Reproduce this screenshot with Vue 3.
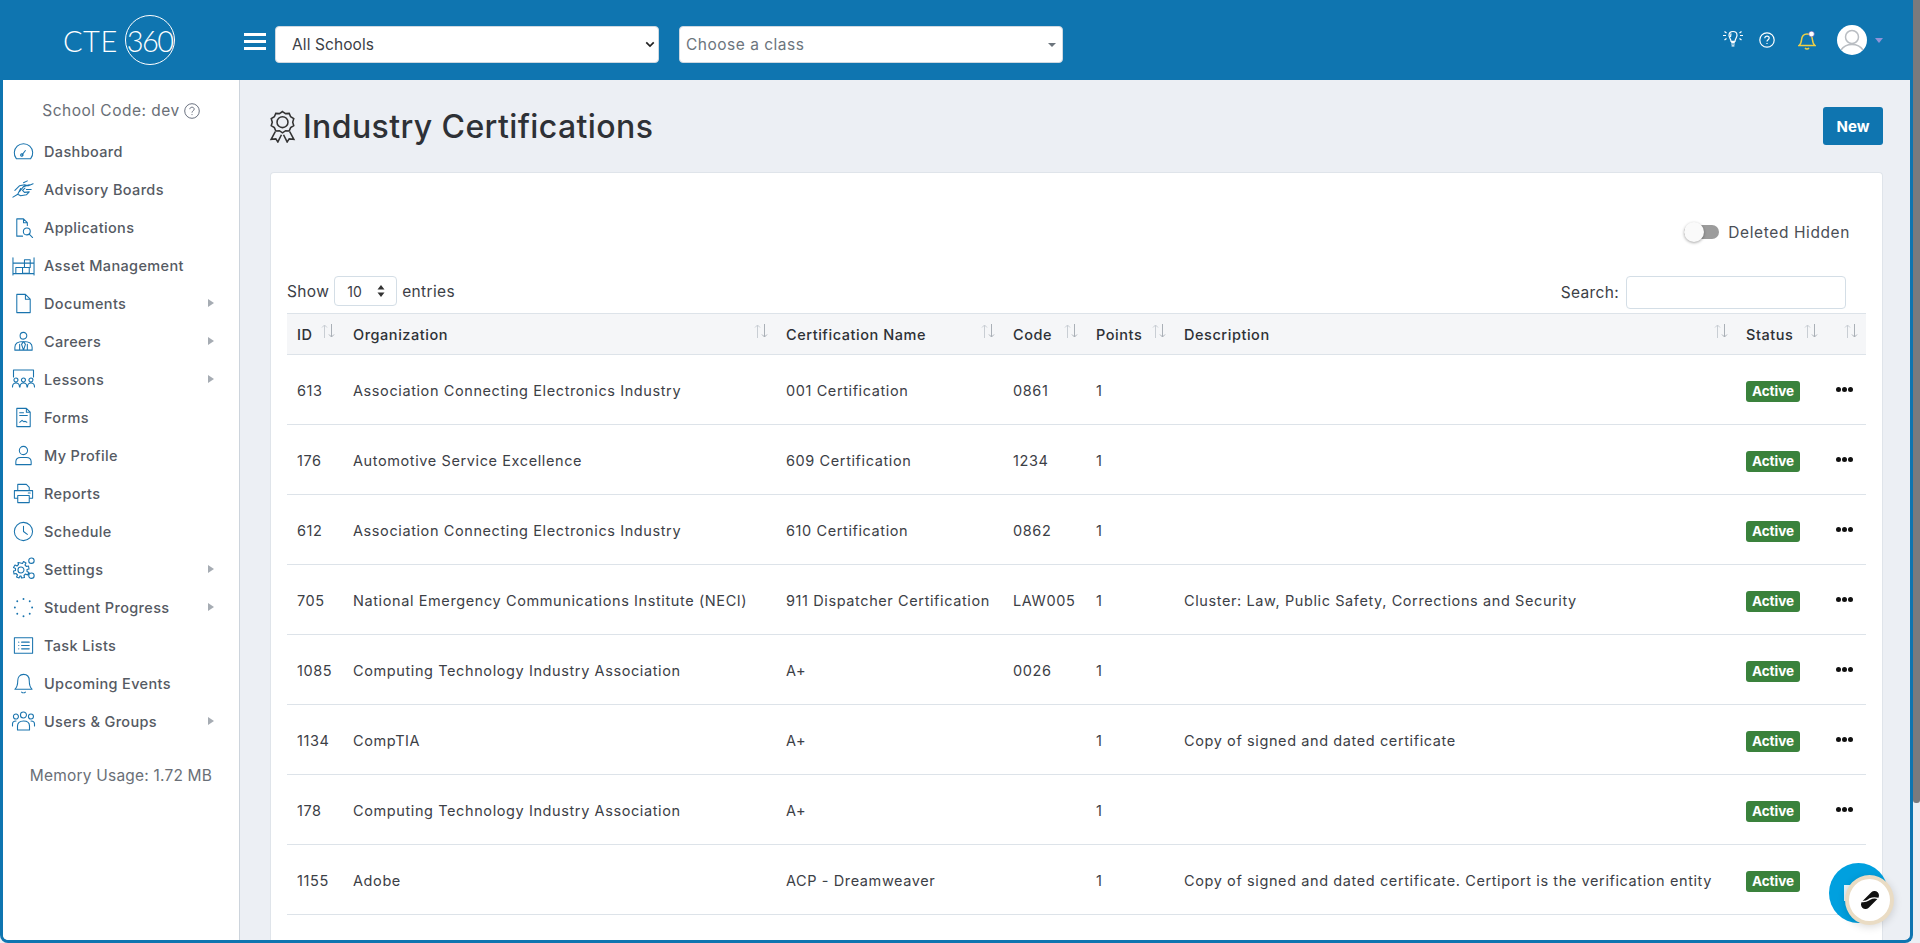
<script setup>
import { ref } from 'vue'

const schoolFilter = ref('All Schools')
const pageSize = ref('10')
const search = ref('')

// Sidebar entries, d is the outline of the icon on a 24 box
const navItems = [
  { label: 'Dashboard', d: 'M4.5 19.5h15a9.6 9.6 0 1 0-15 0zM10.5 15.5l3.5-4.5M11.5 15.2a1.3 1.3 0 1 1-2.5.6 1.3 1.3 0 0 1 2.5-.6z' },
  { label: 'Advisory Boards', d: 'M1 20l5-3 3 1.500 6-1 3-3-5 .5-2-2 2.500-2.500M3 13l5-5 5-1 4 1 5-2M8 14l4-5 6-2M12 5l4-2M15 12l5 0M6 17l3-6' },
  { label: 'Applications', d: 'M11 21H5V3h7l4 4v3M12 3v4h4M15.500 12.500a3.600 3.600 0 1 1-.1 7.200 3.600 3.600 0 0 1 .1-7.200zM18 19l3.500 3.500' },
  { label: 'Asset Management', d: 'M1 4v18M23 4v18M1 20.500h22M1 9.500h22M4 20v-6h7v6M11 14h7v6h-7M4 14h7M13 14V6h6v8' },
  { label: 'Documents', d: 'M5 2.500h9l5 5v14H5zM14 2.500v5h5', sub: true },
  { label: 'Careers', d: 'M12 2.500a3.500 3.500 0 1 1-.1 7 3.500 3.500 0 0 1 .1-7zM3 21v-3c0-4 4-6 9-6s9 2 9 6v3zM8 21v-6M16 21v-6M12 12l-2 3 2 6 2-6z', sub: true },
  { label: 'Lessons', wide: true, d: 'M2 10V3h20v7M4.500 11a2 2 0 1 1-.1 4 2 2 0 0 1 .1-4zM12 11a2 2 0 1 1-.1 4 2 2 0 0 1 .1-4zM19.500 11a2 2 0 1 1-.1 4 2 2 0 0 1 .1-4zM1 20c0-3 1.500-4 3.500-4S8 17 8 20M8.500 20c0-3 1.500-4 3.500-4s3.500 1 3.500 4M16 20c0-3 1.500-4 3.500-4s3.500 1 3.500 4', sub: true },
  { label: 'Forms', d: 'M5 2.500h10l4 4v15H5zM15 2.500v4h4M8 7h4M8 10h8M8 17l2.500-2 2 1.500 1-.5 2 1' },
  { label: 'My Profile', d: 'M12 2.500a4.300 4.300 0 1 1-.1 8.600 4.300 4.300 0 0 1 .1-8.600zM4 21.500v-3c0-3 2-4.500 5-4.500h6c3 0 5 1.500 5 4.500v3z' },
  { label: 'Reports', d: 'M6 9V2.500h9l3 3V9M6 17H2.500V9h19v8H18M6 14h12v7.500H6zM17 11.500h2', sub: false },
  { label: 'Schedule', d: 'M12 2.500a9.500 9.500 0 1 1-.1 19 9.500 9.500 0 0 1 .1-19zM12 6.500V12l4 3' },
  { label: 'Settings', wide: true, sub: true, d: 'M9 6l2 .5 1-2 2.500 1.500-1 2 1.500 1.500 2-.5.500 3-2 .5v2l2 1-1.500 2.500-2-1-1.500 1.500.5 2-3 .5-.5-2H8.500l-1 2L5 20l1-2-1.500-1.500-2 .5L2 14l2-.5v-2l-2-1L3.500 8l2 1L7 7.500l-.5-2zM9.500 10a3 3 0 1 1-.1 6 3 3 0 0 1 .1-6zM20 1a2.700 2.700 0 1 1-.1 5.400A2.700 2.700 0 0 1 20 1zM20 16a2.700 2.700 0 1 1-.1 5.400A2.700 2.700 0 0 1 20 16z' },
  { label: 'Student Progress', dotted: true, sub: true, d: 'M12 3v.1M18.500 5.500v.1M21 12v.1M18.500 18.500v.1M12 21v.1M5.500 18.500v.1M3 12v.1M5.500 5.500v.1' },
  { label: 'Task Lists', d: 'M2.500 4h19v16h-19zM7 8.500h.1M7 12h.1M7 15.500h.1M10 8.500h8M10 12h8M10 15.500h8' },
  { label: 'Upcoming Events', d: 'M12 2.500c4 0 6 3 6 6.500 0 5 1 7 3 9H3c2-2 3-4 3-9 0-3.500 2-6.500 6-6.500zM10 21c1 1 3 1 4 0' },
  { label: 'Users & Groups', wide: true, sub: true, d: 'M12 3a3 3 0 1 1-.1 6 3 3 0 0 1 .1-6zM4.500 5a2.500 2.500 0 1 1-.1 5 2.500 2.500 0 0 1 .1-5zM19.500 5a2.500 2.500 0 1 1-.1 5 2.500 2.500 0 0 1 .1-5zM6 21v-4c0-3 2-5 6-5s6 2 6 5v4zM1 17v-2c0-2 1.500-3 3.500-3M23 17v-2c0-2-1.500-3-3.500-3' }
]

const columns = [
  { label: 'ID', width: 56 },
  { label: 'Organization', width: 433 },
  { label: 'Certification Name', width: 227 },
  { label: 'Code', width: 83 },
  { label: 'Points', width: 88 },
  { label: 'Description', width: 562 },
  { label: 'Status', width: 90 },
  { label: '', width: 40 }
]

const certifications = [
  { id: 613, org: 'Association Connecting Electronics Industry', name: '001 Certification', code: '0861', points: 1, desc: '' },
  { id: 176, org: 'Automotive Service Excellence', name: '609 Certification', code: '1234', points: 1, desc: '' },
  { id: 612, org: 'Association Connecting Electronics Industry', name: '610 Certification', code: '0862', points: 1, desc: '' },
  { id: 705, org: 'National Emergency Communications Institute (NECI)', name: '911 Dispatcher Certification', code: 'LAW005', points: 1, desc: 'Cluster: Law, Public Safety, Corrections and Security' },
  { id: 1085, org: 'Computing Technology Industry Association', name: 'A+', code: '0026', points: 1, desc: '' },
  { id: 1134, org: 'CompTIA', name: 'A+', code: '', points: 1, desc: 'Copy of signed and dated certificate' },
  { id: 178, org: 'Computing Technology Industry Association', name: 'A+', code: '', points: 1, desc: '' },
  { id: 1155, org: 'Adobe', name: 'ACP - Dreamweaver', code: '', points: 1, desc: 'Copy of signed and dated certificate. Certiport is the verification entity' }
]
</script>

<template>
  <div class="page">
    <div class="shell">
      <header class="topbar">
        <div class="logo">
          <span class="logo-cte">CTE</span>
          <span class="logo-ring">360</span>
        </div>
        <button class="burger" aria-label="Menu"><i></i><i></i><i></i></button>
        <div class="select-wrap">
          <select v-model="schoolFilter" class="top-select">
            <option>All Schools</option>
          </select>
          <svg class="chevron" viewBox="0 0 12 8"><path d="M1.500 1.500 6 6l4.500-4.500" /></svg>
        </div>
        <div class="class-picker">
          <span>Choose a class</span>
          <i class="picker-caret"></i>
        </div>
        <div class="top-icons">
          <svg class="ic-bulb" viewBox="0 0 20 18" fill="none" stroke="#fff" stroke-width="1.200">
            <path d="M10 1.500c-2.500 0-4 1.800-4 3.800 0 2.200 1.700 3 2 6h4c.3-3 2-3.800 2-6 0-2-1.500-3.800-4-3.800zM8.200 12.500h3.600M8.200 14h3.600M8.600 15.800h2.800M8 3.500 7.500 7M0 5.500h3M17 5.500h3M1.500 1.500l2 1.500M18.500 1.500l-2 1.500M1.500 10l2-1.500M18.500 10l-2-1.500" />
          </svg>
          <svg class="ic-help" viewBox="0 0 16 16" fill="none" stroke="#fff" stroke-width="1.200">
            <circle cx="8" cy="8" r="7.200" />
            <path d="M5.800 6.200C5.800 5 6.800 4.200 8 4.200s2.200.8 2.200 1.900c0 1.700-2.200 1.700-2.200 3.500M8 11.100v1" />
          </svg>
          <svg class="ic-bell" viewBox="0 0 18 19" fill="none" stroke="#f0cf45" stroke-width="1.500">
            <path d="M1 14.500c1.500-1 2.200-2.500 2.500-5.500.3-3.500 2-6 5.500-6s5.200 2.500 5.500 6c.3 3 1 4.500 2.500 5.500zM7 17c1 1.200 3 1.200 4 0" />
            <circle cx="13.500" cy="3" r="2.800" fill="#fff" stroke="#6a55b0" stroke-width=".6" />
          </svg>
          <span class="avatar">
            <svg viewBox="0 0 30 30" fill="none" stroke="#b9bdc2" stroke-width="1.500">
              <circle cx="15" cy="12" r="6.500" />
              <path d="M4 25c3-4.500 7-5.500 11-5.500s8 1 11 5.500" />
            </svg>
          </span>
          <i class="avatar-caret"></i>
        </div>
      </header>

      <div class="body-row">
        <aside class="sidebar">
          <div class="school-code">
            School Code: dev
            <svg viewBox="0 0 16 16" fill="none" stroke="#6b7280" stroke-width="1">
              <circle cx="8" cy="8" r="7.300" />
              <path d="M5.800 6.200C5.800 5 6.800 4.200 8 4.200s2.200.8 2.200 1.900c0 1.700-2.200 1.700-2.200 3.500M8 11.100v1" />
            </svg>
          </div>
          <nav class="nav">
            <a v-for="item in navItems" :key="item.label" class="nav-item">
              <span class="nav-icon">
                <svg
                  :class="{ wide: item.wide, dotted: item.dotted }"
                  viewBox="0 0 24 24"
                  fill="none"
                  stroke="#1a74ae"
                  stroke-width="1.100"
                  stroke-linecap="round"
                  stroke-linejoin="round"
                >
                  <path :d="item.d" />
                </svg>
              </span>
              <span class="nav-label">{{ item.label }}</span>
              <i v-if="item.sub" class="nav-arrow"></i>
            </a>
          </nav>
          <div class="memory">Memory Usage: 1.72 MB</div>
        </aside>

        <main class="content">
          <div class="title-row">
            <h1>
              <svg viewBox="0 0 26 32" fill="none" stroke="#333" stroke-width="1.500">
                <path d="M13 1.500l3 2 3.500-.2 1.400 3.200 3 1.900-1 3.400 1 3.400-3 1.900-1.400 3.200-3.500-.2-3 2-3-2-3.500.2-1.400-3.200-3-1.900 1-3.400-1-3.400 3-1.900 1.400-3.200 3.500.2z" />
                <circle cx="13" cy="11.800" r="5.300" />
                <path d="M6 21 2 28.500l4.500-.5 2 3L12 24M20 21l4 7.500-4.500-.5-2 3L14 24" />
              </svg>
              Industry Certifications
            </h1>
            <button class="btn-new">New</button>
          </div>

          <section class="card">
            <div class="toggle-row">
              <span class="toggle"><i></i></span>
              <span>Deleted Hidden</span>
            </div>
            <div class="controls">
              <label class="show">
                Show
                <span class="size-wrap">
                  <select v-model="pageSize" class="size-select">
                    <option>10</option>
                    <option>25</option>
                    <option>50</option>
                  </select>
                  <svg viewBox="0 0 8 12"><path d="M4 0 7.500 4.500H.5zM4 12 .5 7.500h7z" /></svg>
                </span>
                entries
              </label>
              <label class="search">
                Search:
                <input v-model="search" type="text" />
              </label>
            </div>

            <table class="cert-table">
              <colgroup>
                <col v-for="c in columns" :key="c.label" :style="{ width: c.width + 'px' }" />
              </colgroup>
              <thead>
                <tr>
                  <th v-for="c in columns" :key="c.label">
                    <div class="th-inner">
                      <span>{{ c.label }}</span>
                      <svg class="sort" viewBox="0 0 14 14" fill="none" stroke="#c9ced4" stroke-width="1">
                        <path d="M3.500 14V1M1 3.500 3.500 1 6 3.500" />
                        <path d="M10.500 0v13M8 10.500l2.500 2.500 2.500-2.500" stroke="#aab0b7" />
                      </svg>
                    </div>
                  </th>
                </tr>
              </thead>
              <tbody>
                <tr v-for="row in certifications" :key="row.id">
                  <td>{{ row.id }}</td>
                  <td>{{ row.org }}</td>
                  <td>{{ row.name }}</td>
                  <td>{{ row.code }}</td>
                  <td>{{ row.points }}</td>
                  <td>{{ row.desc }}</td>
                  <td><span class="badge">Active</span></td>
                  <td><span class="dots"><i></i><i></i><i></i></span></td>
                </tr>
              </tbody>
            </table>
          </section>
        </main>
      </div>

      <div class="chat">
        <span class="chat-back"><i></i></span>
        <span class="chat-front">
          <svg viewBox="0 0 20 20" fill="none" stroke-linecap="round">
            <path d="M5.500 14.500 14.500 5.500" stroke="#111" stroke-width="9" />
            <path d="M2 11.500C7 12 8 10 10 9c2-1 5-1.500 8-.5" stroke="#fff" stroke-width="1.400" />
          </svg>
        </span>
      </div>
    </div>
    <div class="scrollbar"><div class="thumb"></div></div>
  </div>
</template>

<style>
html, body {
  margin: 0;
  overflow: hidden;
}
</style>

<style scoped>
.page {
  display: flex;
  height: 943px;
  width: 1920px;
  background: #eceff4;
  font-family: Inter, "Noto Sans", sans-serif;
  font-size: 14.500px;
  letter-spacing: 0.5px;
  color: #3c4046;
  overflow: hidden;
}

.shell {
  position: relative;
  flex: 1;
  display: flex;
  flex-direction: column;
  min-width: 0;
  border: solid #0f75b0;
  border-width: 0 3px 3px;
  border-bottom-right-radius: 8px;
  border-bottom-left-radius: 8px;
  overflow: hidden;
}

.scrollbar {
  width: 7px;
  flex: none;
}

.thumb {
  height: 803px;
  background: #7a7a7d;
  border-radius: 0 0 3px 3px;
}

/* top bar */
.topbar {
  flex: none;
  height: 80px;
  margin: 0 -3px;
  padding-left: 3px;
  background: #0f75b0;
  display: flex;
  align-items: center;
  box-sizing: border-box;
}

.logo {
  width: 241px;
  padding-left: 60px;
  box-sizing: border-box;
  display: flex;
  align-items: center;
  color: #fff;
  font-family: Lato, sans-serif;
  font-weight: 300;
  letter-spacing: 0;
}

.logo-cte {
  font-size: 29px;
  letter-spacing: 0.5px;
  margin-right: 7px;
}

.logo-ring {
  width: 50px;
  height: 50px;
  border: 1.500px solid #fff;
  border-radius: 50%;
  display: flex;
  align-items: center;
  justify-content: center;
  font-size: 29px;
  letter-spacing: -1.500px;
  box-sizing: border-box;
}

.burger {
  width: 22px;
  height: 17px;
  padding: 0;
  border: 0;
  background: none;
  display: flex;
  flex-direction: column;
  justify-content: space-between;
  margin-right: 9px;
  margin-top: 3px;
}

.burger i {
  display: block;
  height: 3px;
  background: #fff;
}

.select-wrap {
  position: relative;
  width: 384px;
  height: 37px;
  margin-right: 21px;
  margin-top: 9px;
}

.top-select {
  width: 100%;
  height: 100%;
  appearance: none;
  border: 1px solid #cfd8e0;
  border-radius: 4px;
  background: #fff;
  padding: 0 16px;
  font: inherit;
  font-size: 15.500px;
  letter-spacing: 0.1px;
  color: #3c4046;
}

.chevron {
  position: absolute;
  right: 4px;
  top: 15px;
  width: 10px;
  height: 7px;
  fill: none;
  stroke: #222;
  stroke-width: 2;
}

.class-picker {
  width: 384px;
  height: 37px;
  margin-left: -1px;
  margin-top: 9px;
  background: #fff;
  border: 1px solid #cfd8e0;
  border-radius: 4px;
  box-sizing: border-box;
  display: flex;
  align-items: center;
  justify-content: space-between;
  padding: 0 6px 0 6px;
  font-size: 15.500px;
  letter-spacing: 0.5px;
  color: #6c757d;
}

.picker-caret {
  border: 4px solid transparent;
  border-top: 4px solid #6c757d;
  border-bottom: 0;
}

.top-icons {
  margin-left: auto;
  margin-right: 30px;
  display: flex;
  align-items: center;
  height: 30px;
}

.ic-bulb {
  width: 20px;
  height: 18px;
  margin-right: 16px;
  margin-top: -3px;
}

.ic-help {
  width: 16px;
  height: 16px;
  margin-right: 23px;
  margin-top: -1px;
}

.ic-bell {
  width: 18px;
  height: 19px;
  margin-right: 21px;
  margin-top: 1px;
}

.avatar {
  width: 30px;
  height: 30px;
  border-radius: 50%;
  background: #fff;
  overflow: hidden;
  margin-right: 8px;
}

.avatar svg {
  display: block;
}

.avatar-caret {
  border: 4px solid transparent;
  border-top: 5px solid #8f93d8;
  border-bottom: 0;
}

/* sidebar */
.body-row {
  flex: 1;
  display: flex;
  min-height: 0;
}

.sidebar {
  flex: none;
  width: 237px;
  box-sizing: border-box;
  background: #fff;
  border-right: 1px solid #cdd4dc;
}

.school-code {
  height: 52px;
  padding-top: 9px;
  box-sizing: border-box;
  display: flex;
  justify-content: center;
  align-items: center;
  gap: 4px;
  font-size: 15.500px;
  letter-spacing: 0.5px;
  color: #6a6f77;
}

.school-code svg {
  width: 16px;
  height: 16px;
}

.nav-item {
  height: 38px;
  display: flex;
  align-items: center;
  color: #555a63;
  font-weight: 500;
  font-size: 14.500px;
  letter-spacing: 0.35px;
  padding-right: 25px;
}

.nav-icon {
  width: 41px;
  flex: none;
  display: flex;
  justify-content: center;
}

.nav-icon svg {
  width: 23px;
  height: 23px;
}

.nav-icon svg.wide {
  width: 25px;
  height: 24px;
}

.nav-icon svg.dotted path {
  stroke-width: 2;
}

.nav-label {
  flex: 1;
}

.nav-arrow {
  border: 4px solid transparent;
  border-left: 6px solid #a6acb3;
  border-right: 0;
}

.memory {
  margin-top: 26px;
  text-align: center;
  font-size: 15.500px;
  letter-spacing: 0.2px;
  color: #6a6f77;
}

/* main area */
.content {
  flex: 1;
  min-width: 0;
  padding: 27px 27px 0 30px;
  display: flex;
  flex-direction: column;
}

.title-row {
  display: flex;
  justify-content: space-between;
  align-items: center;
  height: 38px;
  margin-bottom: 27px;
}

h1 {
  margin: 0;
  display: flex;
  align-items: center;
  gap: 7px;
  font-size: 32px;
  font-weight: 500;
  letter-spacing: 0.4px;
  color: #2e3136;
}

h1 svg {
  width: 27px;
  height: 33px;
  margin-left: -1px;
}

.btn-new {
  width: 60px;
  height: 38px;
  background: #0f75b0;
  color: #fff;
  border: 0;
  border-radius: 3px;
  font: inherit;
  font-weight: 700;
  font-size: 15px;
  letter-spacing: 0;
}

.card {
  flex: 1;
  background: #fff;
  border: 1px solid #dfe4ea;
  border-bottom: 0;
  border-radius: 4px 4px 0 0;
  padding: 49px 16px 0;
  min-height: 0;
}

.toggle-row {
  display: flex;
  justify-content: flex-end;
  align-items: center;
  height: 20px;
  gap: 9px;
  padding-right: 16px;
  font-size: 15.500px;
  letter-spacing: 0.6px;
  color: #4a4e55;
}

.toggle {
  position: relative;
  width: 35px;
  height: 14px;
  background: #9c9c9c;
  border-radius: 7px;
}

.toggle i {
  position: absolute;
  left: 0;
  top: -3px;
  width: 20px;
  height: 20px;
  border-radius: 50%;
  background: #fafafa;
  box-shadow: 0 1px 3px rgba(0, 0, 0, 0.35);
}

.controls {
  display: flex;
  justify-content: space-between;
  align-items: flex-start;
  height: 33px;
  margin-top: 34px;
  margin-bottom: 4px;
  padding-right: 20px;
}

.show, .search {
  display: flex;
  align-items: center;
  gap: 5px;
  font-size: 15.500px;
  letter-spacing: 0.35px;
  color: #3c4046;
}

.search {
  gap: 7px;
}

.size-wrap {
  position: relative;
  width: 63px;
  height: 30px;
}

.size-select {
  width: 100%;
  height: 100%;
  appearance: none;
  background: #fff;
  border: 1px solid #d4dee6;
  border-radius: 4px;
  padding: 0 12px;
  font: inherit;
  font-size: 14px;
  color: #3c4046;
}

.size-wrap svg {
  position: absolute;
  right: 12px;
  top: 9px;
  width: 8px;
  height: 12px;
  fill: #333;
}

.search input {
  width: 220px;
  height: 33px;
  box-sizing: border-box;
  border: 1px solid #d4dee6;
  border-radius: 4px;
}

.cert-table {
  width: 1579px;
  table-layout: fixed;
  border-collapse: collapse;
}

.cert-table th {
  height: 41px;
  padding: 0 8px 0 10px;
  background: #f5f6f8;
  border-top: 1px solid #dde3e9;
  border-bottom: 1px solid #dde3e9;
  text-align: left;
  font-weight: 500;
  letter-spacing: 0.55px;
  color: #2e3136;
  box-sizing: border-box;
}

.th-inner {
  display: flex;
  justify-content: space-between;
  align-items: center;
}

.sort {
  width: 14px;
  height: 14px;
  margin-top: -6px;
  flex: none;
}

.cert-table td {
  height: 70px;
  padding: 2px 9px 0 10px;
  border-bottom: 1px solid #dde3e9;
  box-sizing: border-box;
  white-space: nowrap;
  overflow: visible;
  letter-spacing: 0.6px;
  color: #3c4046;
}

.badge {
  display: inline-block;
  width: 54px;
  height: 21px;
  line-height: 21px;
  text-align: center;
  background: #3a823c;
  color: #fff;
  border-radius: 3px;
  font-weight: 700;
  font-size: 13.500px;
  letter-spacing: 0;
  position: relative;
  top: 1px;
}

.dots {
  display: flex;
  gap: 1px;
  margin-top: -2px;
}

.dots i {
  width: 5px;
  height: 5px;
  border-radius: 50%;
  background: #111;
}

/* chat launcher */
.chat {
  position: absolute;
  right: 16px;
  bottom: 15px;
  width: 65px;
  height: 62px;
}

.chat-back {
  position: absolute;
  left: 0;
  top: 0;
  width: 59px;
  height: 60px;
  border-radius: 50%;
  background: #00a0df;
}

.chat-back i {
  position: absolute;
  left: 15px;
  top: 22px;
  width: 8px;
  height: 16px;
  background: #e8f3f8;
}

.chat-front {
  position: absolute;
  left: 16px;
  top: 12px;
  width: 49px;
  height: 50px;
  box-sizing: border-box;
  border-radius: 50%;
  background: #fff;
  border: 4px solid #eadcc4;
  box-shadow: 0 2px 8px rgba(0, 0, 0, 0.15);
  display: flex;
  align-items: center;
  justify-content: center;
}

.chat-front svg {
  width: 20px;
  height: 22px;
}
</style>
